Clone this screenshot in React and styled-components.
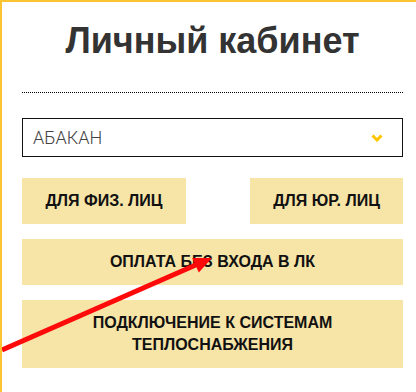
import React from "react"
import styled, { createGlobalStyle } from "styled-components"

const GlobalStyle = createGlobalStyle`
  html, body {
    margin: 0;
    padding: 0;
    background: #fff;
  }
  * { box-sizing: border-box; }
`

const Page = styled.div`
  position: relative;
  width: 416px;
  height: 392px;
  overflow: hidden;
  border-top: 2px solid #fcc431;
  border-left: 2px solid #fcc431;
  padding: 19px 13px 0 20px;
  font-family: "Liberation Sans", Arial, sans-serif;
`

const Title = styled.h1`
  margin: 0;
  font-size: 36px;
  line-height: 40px;
  font-weight: 700;
  color: #333;
  text-align: center;
`

const Divider = styled.hr`
  margin: 31px 0 0;
  border: none;
  border-top: 1px dotted #000;
  height: 0;
`

const Select = styled.div`
  margin-top: 25px;
  height: 39px;
  border: 1px solid #111;
  display: flex;
  align-items: center;
  justify-content: space-between;
  padding: 0 19px 0 10px;
  font-family: Roboto, "Liberation Sans", sans-serif;
  font-weight: 300;
  font-size: 18px;
  color: #444;
`

const Chevron = () => (
  <svg width="12" height="8" viewBox="0 0 12 8">
    <polyline points="1.5,1.5 6,6 10.5,1.5" fill="none" stroke="#fcc500" strokeWidth="3" />
  </svg>
)

const Row = styled.div`
  margin-top: 21px;
  display: flex;
  justify-content: space-between;
`

const Button = styled.div`
  width: ${p => p.$w || "100%"};
  height: ${p => p.$h || 46}px;
  margin-top: ${p => p.$mt || 0}px;
  background: #f7e4a7;
  display: flex;
  align-items: center;
  justify-content: center;
  text-align: center;
  font-weight: 700;
  font-size: 16px;
  line-height: 22px;
  color: #111;
  text-transform: uppercase;
`

const Arrow = styled.svg`
  position: absolute;
  left: -2px;
  top: -2px;
  pointer-events: none;
`

export default function App() {
  return (
    <>
      <GlobalStyle />
      <Page>
        <Title>Личный кабинет</Title>
        <Divider />
        <Select>
          <span>АБАКАН</span>
          <Chevron />
        </Select>
        <Row>
          <Button $w="164px">Для физ. лиц</Button>
          <Button $w="153px">Для юр. лиц</Button>
        </Row>
        <Button $mt={15}>Оплата без входа в ЛК</Button>
        <Button $mt={15} $h={68}>
          Подключение к системам
          <br />
          теплоснабжения
        </Button>
        <Arrow width="416" height="392" viewBox="0 0 416 392">
          <line x1="2" y1="350" x2="198" y2="264" stroke="#ff0a0a" strokeWidth="5" />
          <polygon points="212,258 198.8,272.5 192.2,258" fill="#ff0a0a" />
        </Arrow>
      </Page>
    </>
  )
}
